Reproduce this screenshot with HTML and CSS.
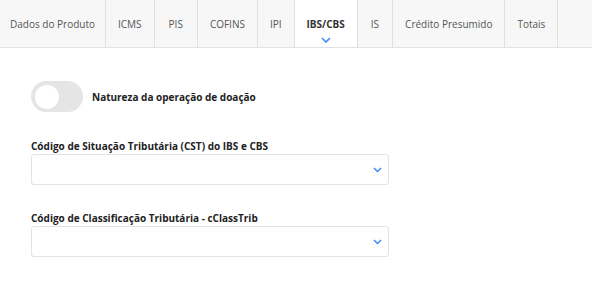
FILE: index.html
```html
<!DOCTYPE html>
<html lang="pt-BR">
<head>
    <meta charset="UTF-8">
    <meta name="viewport" content="width=device-width, initial-scale=1.0">
    <title>IBS/CBS</title>
    <link rel="stylesheet" href="styles.css">
</head>
<body>
    <!-- Abas do produto -->
    <nav class="tabs">
        <a class="tab tab-first">Dados do Produto</a>
        <a class="tab">ICMS</a>
        <a class="tab tab-pis">PIS</a>
        <a class="tab">COFINS</a>
        <a class="tab">IPI</a>
        <a class="tab active">IBS/CBS
            <svg class="tab-caret" width="10" height="6" viewBox="0 0 10 6"><path d="M1 1l4 4 4-4" fill="none" stroke="#3d8af7" stroke-width="1.6"/></svg>
        </a>
        <a class="tab tab-is">IS</a>
        <a class="tab">Crédito Presumido</a>
        <a class="tab">Totais</a>
    </nav>

    <div class="content">
        <div class="switch-row">
            <span class="switch"><span class="knob"></span></span>
            <span class="switch-label">Natureza da operação de doação</span>
        </div>

        <div class="field">
            <label>Código de Situação Tributária (CST) do IBS e CBS</label>
            <div class="select">
                <svg width="9" height="6" viewBox="0 0 9 6"><path d="M1 1l3.5 3.5L8 1" fill="none" stroke="#3d8af7" stroke-width="1.5"/></svg>
            </div>
        </div>

        <div class="field">
            <label>Código de Classificação Tributária - cClassTrib</label>
            <div class="select">
                <svg width="9" height="6" viewBox="0 0 9 6"><path d="M1 1l3.5 3.5L8 1" fill="none" stroke="#3d8af7" stroke-width="1.5"/></svg>
            </div>
        </div>
    </div>
</body>
</html>
```

FILE: styles.css
```css
body {
    font-family: 'Open Sans', sans-serif;
    background-color: #fff;
    margin: 0;
    padding: 0;
}
.tabs {
    display: flex;
    height: 47px;
    background-color: #f7f7f7;
    border-bottom: 1px solid #dfe3e8;
}
.tab {
    position: relative;
    display: flex;
    align-items: center;
    justify-content: center;
    padding: 0 12px;
    font-size: 10px;
    color: #555;
    border-right: 1px solid #e0e0e0;
}
.tab-first {
    padding: 0 10px;
}
.tab-pis {
    padding: 0 14px;
}
.tab-is {
    padding: 0 13px;
}
.tab.active {
    background-color: #fff;
    color: #333;
    font-weight: 700;
}
.tab-caret {
    position: absolute;
    left: 50%;
    bottom: 4px;
    margin-left: -5px;
}
.content {
    padding: 33px 31px 10px;
}
.switch-row {
    display: flex;
    align-items: center;
    gap: 9px;
    margin-bottom: 27px;
}
.switch {
    display: flex;
    align-items: center;
    width: 52px;
    height: 31px;
    border-radius: 16px;
    background-color: #e5e5e5;
    padding: 0 4px;
    box-sizing: border-box;
}
.knob {
    width: 24px;
    height: 24px;
    border-radius: 50%;
    background-color: #fff;
}
.switch-label, .field label {
    font-size: 10px;
    font-weight: 700;
    color: #222;
}
.field {
    margin-bottom: 26px;
}
.field:last-child {
    margin-bottom: 0;
}
.field label {
    display: block;
    margin-bottom: 1px;
}
.select {
    display: flex;
    align-items: center;
    justify-content: flex-end;
    width: 358px;
    height: 31px;
    border: 1px solid #e3e3e3;
    border-radius: 3px;
    padding-right: 6px;
    box-sizing: border-box;
}
```
